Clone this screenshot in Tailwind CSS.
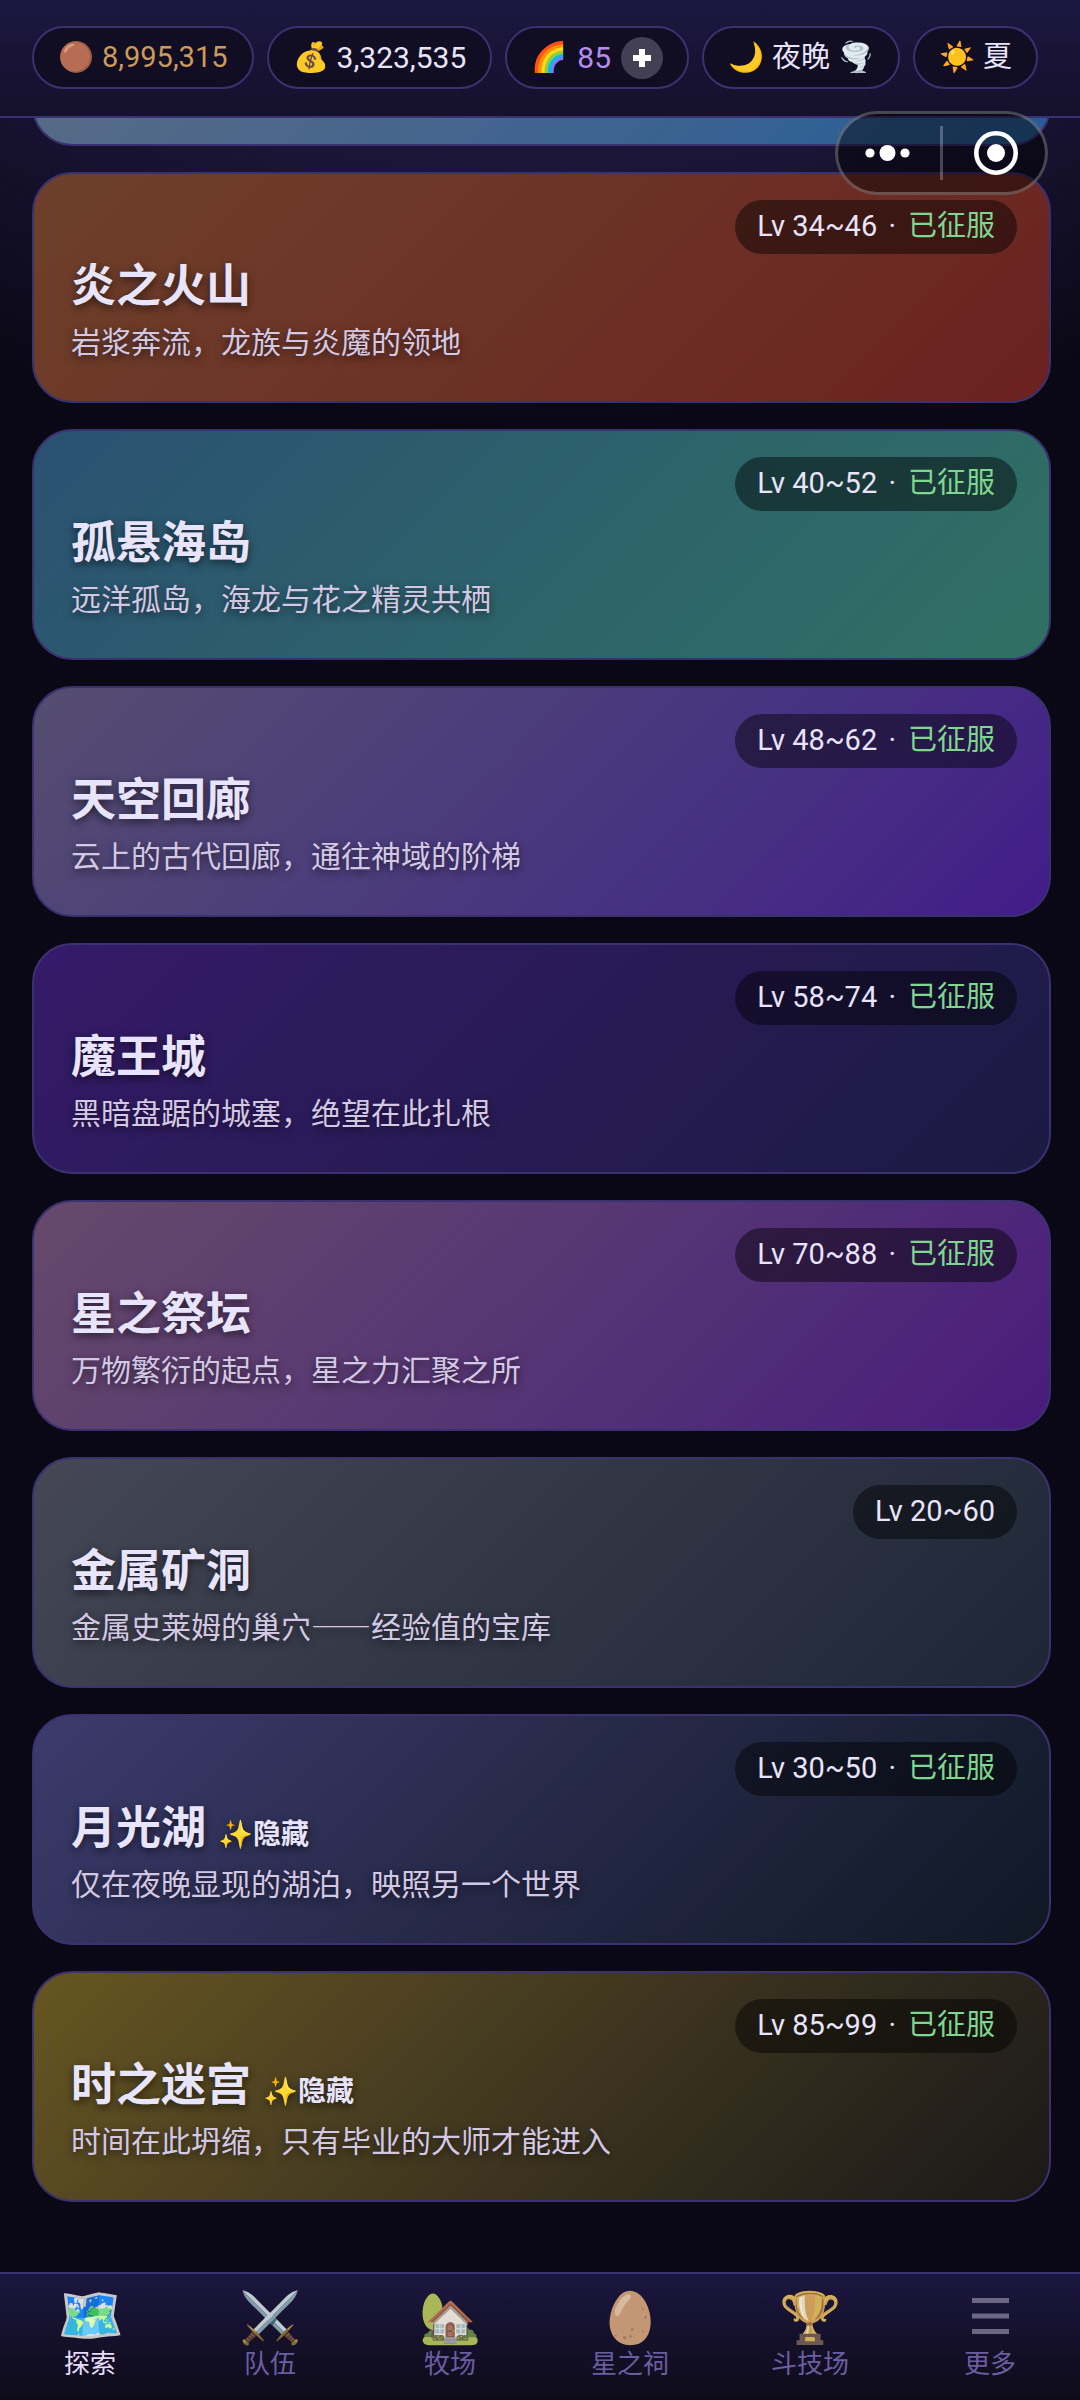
<!DOCTYPE html>
<html lang="zh-CN">
<head>
<meta charset="utf-8">
<title>探索</title>
<script src="https://cdn.jsdelivr.net/npm/@tailwindcss/browser@4"></script>
</head>
<body class="bg-[#0a0815] text-[#e8e4fb] font-['Roboto','Noto_Sans_CJK_SC',sans-serif]">
<div class="flex min-h-screen flex-col bg-[radial-gradient(100%_100%_at_50%_0,#1e1842_0%,#1b1538_40%,#0a0815_100%)] bg-[length:100%_420px] bg-no-repeat">

  <header class="relative z-10 flex h-[118px] items-start gap-[13px] whitespace-nowrap border-b-2 border-[#3a3170] bg-linear-to-b from-[#1c1740] to-[#15102b] px-8 pt-[26px] text-[29px] leading-none">
    <div class="flex h-[63px] items-center gap-2 rounded-full border-2 border-[#3a3170] bg-[#110d22] px-6 text-[#cd9a5b]"><span>🟤</span><span>8,995,315</span></div>
    <div class="flex h-[63px] items-center gap-2 rounded-full border-2 border-[#3a3170] bg-[#110d22] px-6"><span>💰</span><span class="text-[30px]">3,323,535</span></div>
    <div class="flex h-[63px] items-center gap-2.5 rounded-full border-2 border-[#3a3170] bg-[#110d22] px-6 text-[#b58cf0]"><span>🌈</span><span class="text-[30px]">85</span>
      <button class="flex size-[42px] items-center justify-center rounded-full bg-[#444054]" aria-label="添加"><svg class="size-[18px]" viewBox="0 0 18 18"><path d="M6 0h6v6h6v6h-6v6H6v-6H0V6h6z" fill="#fff"/></svg></button></div>
    <div class="flex h-[63px] items-center gap-2 rounded-full border-2 border-[#3a3170] bg-[#110d22] px-6"><span>🌙</span><span>夜晚</span><span>🌪️</span></div>
    <div class="flex h-[63px] items-center gap-2 rounded-full border-2 border-[#3a3170] bg-[#110d22] px-6"><span>☀️</span><span>夏</span></div>
  </header>

  <div class="absolute top-[111px] right-8 z-20 flex h-[84px] w-[213px] items-center rounded-full border-3 border-white/25 bg-black/45">
    <button class="flex flex-1 items-center justify-center pr-1" aria-label="菜单"><svg class="h-4 w-[45px]" viewBox="0 0 45 16" fill="#fff"><circle cx="5" cy="8" r="4.6"/><circle cx="22.500" cy="8" r="8"/><circle cx="40" cy="8" r="4.6"/></svg></button>
    <span class="h-[54px] w-[3px] bg-white/25"></span>
    <button class="flex flex-1 items-center justify-center pl-1" aria-label="关闭"><svg class="size-11" viewBox="0 0 44 44"><circle cx="22" cy="22" r="19.700" fill="none" stroke="#fff" stroke-width="4.600"/><circle cx="22" cy="22" r="9" fill="#fff"/></svg></button>
  </div>

  <main class="flex flex-col gap-[26px] overflow-hidden pr-[29px] pb-16 pl-8 text-shadow-[0_3px_8px_rgb(0_0_0/0.6)]">
    <div class="-mt-[203px] h-[231px] rounded-[40px] border-2 border-[#3a3170] bg-linear-135 from-[#5e6c82] to-[#255d98]"></div>

    <a href="#" class="relative flex h-[231px] flex-col justify-end rounded-[40px] border-2 border-[#3a3170] bg-linear-135 from-[#6d402a] to-[#6b2121] pb-10 pl-[37px]">
      <span class="absolute top-[26px] right-8 flex h-[54px] items-center rounded-full bg-black/45 px-[22px] pb-0.5 text-[29px] leading-none whitespace-pre text-shadow-none">Lv 34~46 <span class="mr-3 ml-1">·</span><span class="text-[#7fd68f]">已征服</span></span>
      <h2 class="mb-0.5 text-[45px] leading-[60px] font-bold">炎之火山</h2>
      <p class="font-['Noto_Sans_CJK_SC',sans-serif] text-[30px] leading-[42px] text-[#d3c8e4]">岩浆奔流，龙族与炎魔的领地</p>
    </a>
    <a href="#" class="relative flex h-[231px] flex-col justify-end rounded-[40px] border-2 border-[#3a3170] bg-linear-135 from-[#2b5172] to-[#307163] pb-10 pl-[37px]">
      <span class="absolute top-[26px] right-8 flex h-[54px] items-center rounded-full bg-black/45 px-[22px] pb-0.5 text-[29px] leading-none whitespace-pre text-shadow-none">Lv 40~52 <span class="mr-3 ml-1">·</span><span class="text-[#7fd68f]">已征服</span></span>
      <h2 class="mb-0.5 text-[45px] leading-[60px] font-bold">孤悬海岛</h2>
      <p class="font-['Noto_Sans_CJK_SC',sans-serif] text-[30px] leading-[42px] text-[#d3c8e4]">远洋孤岛，海龙与花之精灵共栖</p>
    </a>
    <a href="#" class="relative flex h-[231px] flex-col justify-end rounded-[40px] border-2 border-[#3a3170] bg-linear-135 from-[#544d70] to-[#421b89] pb-10 pl-[37px]">
      <span class="absolute top-[26px] right-8 flex h-[54px] items-center rounded-full bg-black/45 px-[22px] pb-0.5 text-[29px] leading-none whitespace-pre text-shadow-none">Lv 48~62 <span class="mr-3 ml-1">·</span><span class="text-[#7fd68f]">已征服</span></span>
      <h2 class="mb-0.5 text-[45px] leading-[60px] font-bold">天空回廊</h2>
      <p class="font-['Noto_Sans_CJK_SC',sans-serif] text-[30px] leading-[42px] text-[#d3c8e4]">云上的古代回廊，通往神域的阶梯</p>
    </a>
    <a href="#" class="relative flex h-[231px] flex-col justify-end rounded-[40px] border-2 border-[#3a3170] bg-linear-135 from-[#351a69] to-[#1b1a42] pb-10 pl-[37px]">
      <span class="absolute top-[26px] right-8 flex h-[54px] items-center rounded-full bg-black/45 px-[22px] pb-0.5 text-[29px] leading-none whitespace-pre text-shadow-none">Lv 58~74 <span class="mr-3 ml-1">·</span><span class="text-[#7fd68f]">已征服</span></span>
      <h2 class="mb-0.5 text-[45px] leading-[60px] font-bold">魔王城</h2>
      <p class="font-['Noto_Sans_CJK_SC',sans-serif] text-[30px] leading-[42px] text-[#d3c8e4]">黑暗盘踞的城塞，绝望在此扎根</p>
    </a>
    <a href="#" class="relative flex h-[231px] flex-col justify-end rounded-[40px] border-2 border-[#3a3170] bg-linear-135 from-[#66496a] to-[#491a7c] pb-10 pl-[37px]">
      <span class="absolute top-[26px] right-8 flex h-[54px] items-center rounded-full bg-black/45 px-[22px] pb-0.5 text-[29px] leading-none whitespace-pre text-shadow-none">Lv 70~88 <span class="mr-3 ml-1">·</span><span class="text-[#7fd68f]">已征服</span></span>
      <h2 class="mb-0.5 text-[45px] leading-[60px] font-bold">星之祭坛</h2>
      <p class="font-['Noto_Sans_CJK_SC',sans-serif] text-[30px] leading-[42px] text-[#d3c8e4]">万物繁衍的起点，星之力汇聚之所</p>
    </a>
    <a href="#" class="relative flex h-[231px] flex-col justify-end rounded-[40px] border-2 border-[#3a3170] bg-linear-135 from-[#454755] to-[#1e2635] pb-10 pl-[37px]">
      <span class="absolute top-[26px] right-8 flex h-[54px] items-center rounded-full bg-black/45 px-[22px] pb-0.5 text-[29px] leading-none whitespace-pre text-shadow-none">Lv 20~60</span>
      <h2 class="mb-0.5 text-[45px] leading-[60px] font-bold">金属矿洞</h2>
      <p class="font-['Noto_Sans_CJK_SC',sans-serif] text-[30px] leading-[42px] text-[#d3c8e4]">金属史莱姆的巢穴——经验值的宝库</p>
    </a>
    <a href="#" class="relative flex h-[231px] flex-col justify-end rounded-[40px] border-2 border-[#3a3170] bg-linear-135 from-[#3c3b6d] to-[#101825] pb-10 pl-[37px]">
      <span class="absolute top-[26px] right-8 flex h-[54px] items-center rounded-full bg-black/45 px-[22px] pb-0.5 text-[29px] leading-none whitespace-pre text-shadow-none">Lv 30~50 <span class="mr-3 ml-1">·</span><span class="text-[#7fd68f]">已征服</span></span>
      <h2 class="mb-0.5 flex items-baseline gap-3 text-[45px] leading-[60px] font-bold">月光湖<span class="text-[28px] leading-none">✨隐藏</span></h2>
      <p class="font-['Noto_Sans_CJK_SC',sans-serif] text-[30px] leading-[42px] text-[#d3c8e4]">仅在夜晚显现的湖泊，映照另一个世界</p>
    </a>
    <a href="#" class="relative flex h-[231px] flex-col justify-end rounded-[40px] border-2 border-[#3a3170] bg-linear-135 from-[#675621] to-[#1b1918] pb-10 pl-[37px]">
      <span class="absolute top-[26px] right-8 flex h-[54px] items-center rounded-full bg-black/45 px-[22px] pb-0.5 text-[29px] leading-none whitespace-pre text-shadow-none">Lv 85~99 <span class="mr-3 ml-1">·</span><span class="text-[#7fd68f]">已征服</span></span>
      <h2 class="mb-0.5 flex items-baseline gap-3 text-[45px] leading-[60px] font-bold">时之迷宫<span class="text-[28px] leading-none">✨隐藏</span></h2>
      <p class="font-['Noto_Sans_CJK_SC',sans-serif] text-[30px] leading-[42px] text-[#d3c8e4]">时间在此坍缩，只有毕业的大师才能进入</p>
    </a>
  </main>

  <nav class="mt-auto grid h-32 grid-cols-6 border-t-2 border-[#3a3170] bg-linear-to-b from-[#1b163f] to-[#0e0b19] pt-3.5 text-center text-[26px] leading-8 text-[#6a5ea0]">
    <a href="#" class="flex flex-col items-center text-[#e6dcfa]"><span class="flex h-[60px] items-center pb-1 text-[54px] leading-none">🗺️</span>探索</a>
    <a href="#" class="flex flex-col items-center"><span class="flex h-[60px] items-center text-[50px] leading-none opacity-90 grayscale-40">⚔️</span>队伍</a>
    <a href="#" class="flex flex-col items-center"><span class="flex h-[60px] items-center text-[50px] leading-none opacity-90 grayscale-40">🏡</span>牧场</a>
    <a href="#" class="flex flex-col items-center"><span class="flex h-[60px] items-center text-[50px] leading-none opacity-90 grayscale-40">🥚</span>星之祠</a>
    <a href="#" class="flex flex-col items-center"><span class="flex h-[60px] items-center text-[50px] leading-none opacity-90 grayscale-40">🏆</span>斗技场</a>
    <a href="#" class="flex flex-col items-center"><span class="flex h-[60px] items-center pb-1"><svg class="h-9 w-[37px]" viewBox="0 0 37 36" fill="#6d6784"><path d="M0 0h37v5H0zM0 15.500h37v5H0zM0 31h37v5H0z"/></svg></span>更多</a>
  </nav>
</div>
</body>
</html>
